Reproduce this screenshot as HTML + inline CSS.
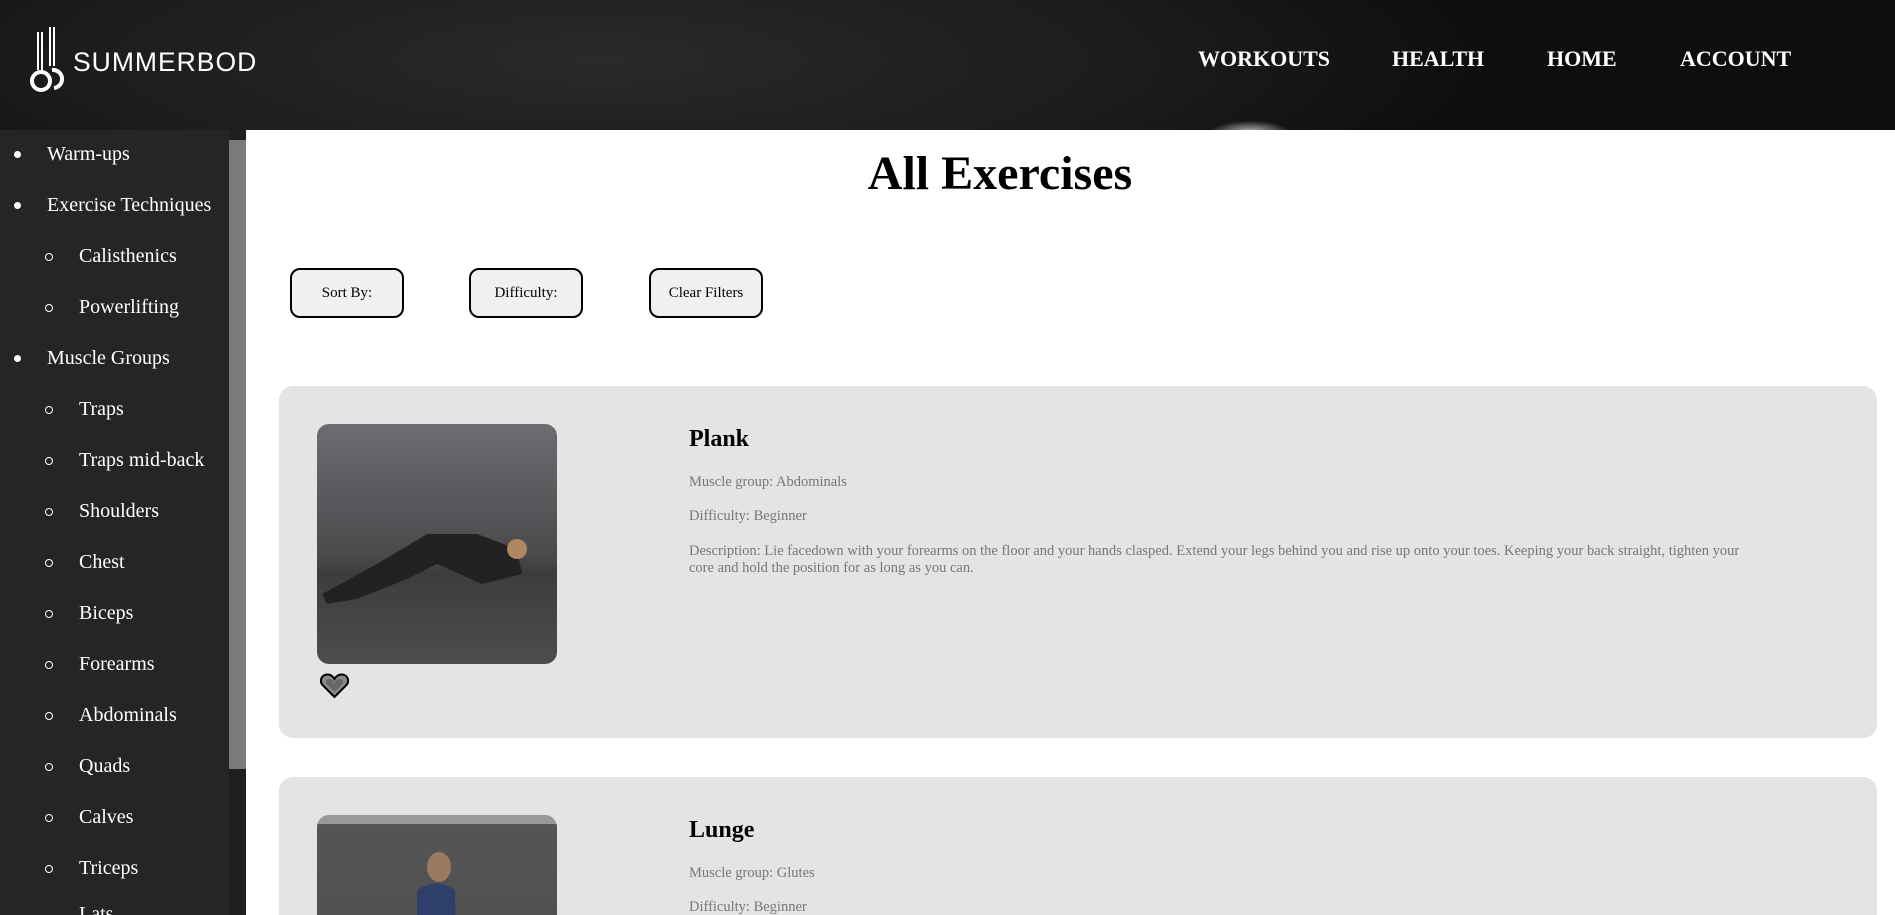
<!DOCTYPE html>
<html><head><meta charset="utf-8"><style>
*{margin:0;padding:0;box-sizing:border-box}
html,body{width:1895px;height:915px;overflow:hidden}
body{background:#fff;font-family:"Liberation Serif",serif;position:relative}
.hdr{position:absolute;left:0;top:0;width:1895px;height:130px;background:radial-gradient(ellipse 50px 14px at 1250px 132px,#bbb,rgba(0,0,0,0) 80%),radial-gradient(ellipse 900px 200px at 600px 60px,#2a2a2a,#1c1c1c 60%,#0e0e0e)}
.logo{position:absolute;left:73px;top:47px;color:#fff;font-family:"Liberation Sans",sans-serif;font-size:26.5px;letter-spacing:1px}
.nav{position:absolute;top:46px;color:#fff;font-weight:bold;font-size:22px}
.side{position:absolute;left:0;top:130px;width:229px;height:785px;background:#252525;color:#fff;font-size:20px;overflow:hidden}
.side div{position:absolute;white-space:nowrap}
.side .d{width:7px;height:7px;border-radius:50%;background:#fff;left:14px}
.side .c{width:8px;height:8px;border-radius:50%;border:1px solid #fff;left:45px}
.sb{position:absolute;left:229px;top:130px;width:17px;height:785px;background:#1f1f1f}
.thumb{position:absolute;left:229px;top:140px;width:17px;height:629px;background:#7b7b7b}
h1{position:absolute;left:0;width:2000px;text-align:center;top:146px;font-size:48px;font-weight:bold}
.btn{position:absolute;top:268px;width:114px;height:50px;border:2px solid #000;border-radius:10px;background:#f0f0f0;font-size:15px;display:flex;align-items:center;justify-content:center}
.card{position:absolute;left:279px;width:1598px;background:#e4e4e4;border-radius:14px;overflow:hidden}
.img{position:absolute;left:38px;top:38px;width:240px;height:240px;border-radius:12px;overflow:hidden}
.t{position:absolute;left:410px;font-size:24px;font-weight:bold}
.p{position:absolute;left:410px;font-size:14.5px;color:#777;line-height:17px;width:1060px}
</style></head><body>
<div class="hdr">
<svg style="position:absolute;left:28px;top:26px" width="38" height="68" viewBox="0 0 38 68">
<g stroke="#fff" fill="none" stroke-width="2">
<path d="M10 6V44M14 6V44M22 1V40M26 1V40"/>
<circle cx="13" cy="55" r="9" stroke-width="4"/>
<path d="M24 44a9 9 0 0 1 2 18" stroke-width="4"/>
</g></svg>
<div class="logo">SUMMERBOD</div>
<div class="nav" style="left:1198px">WORKOUTS</div>
<div class="nav" style="left:1392px">HEALTH</div>
<div class="nav" style="left:1547px">HOME</div>
<div class="nav" style="left:1680px">ACCOUNT</div>
</div>
<div class="side">
<div class="d" style="top:21px"></div><div style="left:47px;top:13px">Warm-ups</div>
<div class="d" style="top:72px"></div><div style="left:47px;top:64px">Exercise Techniques</div>
<div class="c" style="top:123px"></div><div style="left:79px;top:115px">Calisthenics</div>
<div class="c" style="top:174px"></div><div style="left:79px;top:166px">Powerlifting</div>
<div class="d" style="top:225px"></div><div style="left:47px;top:217px">Muscle Groups</div>
<div class="c" style="top:276px"></div><div style="left:79px;top:268px">Traps</div>
<div class="c" style="top:327px"></div><div style="left:79px;top:319px">Traps mid-back</div>
<div class="c" style="top:378px"></div><div style="left:79px;top:370px">Shoulders</div>
<div class="c" style="top:429px"></div><div style="left:79px;top:421px">Chest</div>
<div class="c" style="top:480px"></div><div style="left:79px;top:472px">Biceps</div>
<div class="c" style="top:531px"></div><div style="left:79px;top:523px">Forearms</div>
<div class="c" style="top:582px"></div><div style="left:79px;top:574px">Abdominals</div>
<div class="c" style="top:633px"></div><div style="left:79px;top:625px">Quads</div>
<div class="c" style="top:684px"></div><div style="left:79px;top:676px">Calves</div>
<div class="c" style="top:735px"></div><div style="left:79px;top:727px">Triceps</div>
<div style="left:79px;top:773px">Lats</div>
</div>
<div class="sb"></div><div class="thumb"></div>
<h1>All Exercises</h1>
<div class="btn" style="left:290px">Sort By:</div>
<div class="btn" style="left:469px">Difficulty:</div>
<div class="btn" style="left:649px">Clear Filters</div>
<div class="card" style="top:386px;height:352px">
<div class="img" style="background:linear-gradient(#6e6c70,#4a494c 55%,#3d3c3e 62%,#4d4c4e)">
<svg width="240" height="240"><path d="M5 170L60 140L110 110L160 110L200 125L205 150L165 160L120 140L90 155L40 175L10 180Z" fill="#222"/><circle cx="200" cy="125" r="10" fill="#b08860"/></svg>
</div>
<svg style="position:absolute;left:41px;top:287px" width="29" height="26" viewBox="0 0 29 26"><path d="M14.5 24L2.5 12C-1 8 1.5 1.5 7.5 1.5C11 1.5 13 3.5 14.5 6C16 3.5 18 1.5 21.5 1.5C27.5 1.5 30 8 26.5 12Z" fill="#8a8a8a" stroke="#000" stroke-width="2"/><path d="M14.5 19L7 11.5C5 9 6.5 6 9.5 6C12 6 13.5 8 14.5 10C15.5 8 17 6 19.5 6C22.5 6 24 9 22 11.5Z" fill="#666"/></svg>
<div class="t" style="top:40px">Plank</div>
<div class="p" style="top:88px">Muscle group: Abdominals</div>
<div class="p" style="top:122px">Difficulty: Beginner</div>
<div class="p" style="top:157px">Description: Lie facedown with your forearms on the floor and your hands clasped. Extend your legs behind you and rise up onto your toes. Keeping your back straight, tighten your core and hold the position for as long as you can.</div>
</div>
<div class="card" style="top:777px;height:138px;border-radius:14px 14px 0 0">
<div class="img" style="background:linear-gradient(#999 0,#999 9px,#555 9px,#4a4a4c)">
<svg width="240" height="240"><ellipse cx="122" cy="52" rx="12" ry="15" fill="#9a7a60"/><path d="M100 75Q120 62 138 75L140 240H100Z" fill="#2e3f6a"/></svg>
</div>
<div class="t" style="top:40px">Lunge</div>
<div class="p" style="top:88px">Muscle group: Glutes</div>
<div class="p" style="top:122px">Difficulty: Beginner</div>
</div>
</body></html>
